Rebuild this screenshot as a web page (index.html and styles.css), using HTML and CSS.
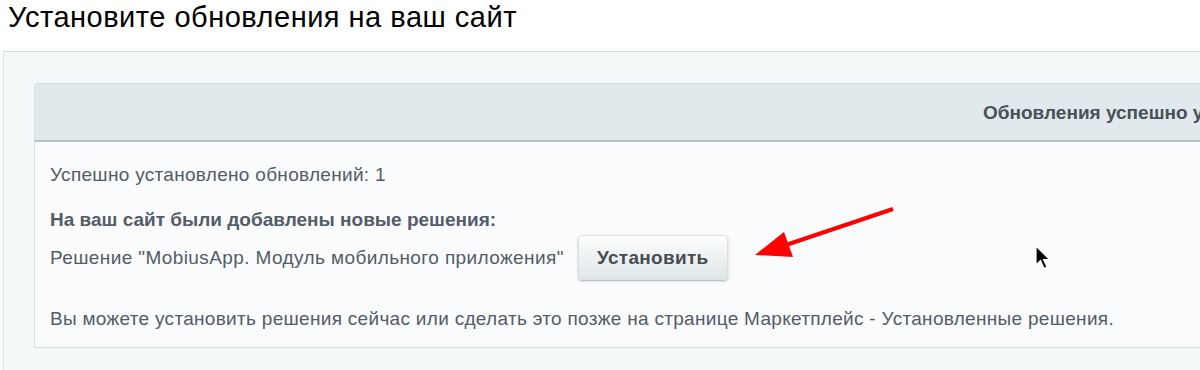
FILE: index.html
```html
<!DOCTYPE html>
<html lang="ru">
<head>
  <meta charset="UTF-8" />
  <meta name="viewport" content="width=device-width, initial-scale=1.0"/>
  <title>Установите обновления на ваш сайт</title>
  <link rel="stylesheet" href="styles.css">
</head>
<body>

  <h1 class="page-title">Установите обновления на ваш сайт</h1>

  <div class="panel">
    <div class="box">
      <div class="box-head">Обновления успешно установлены</div>
      <div class="box-body">
        <p class="line">Успешно установлено обновлений: 1</p>
        <p class="line bold">На ваш сайт были добавлены новые решения:</p>
        <div class="solution">
          <span>Решение "MobiusApp. Модуль мобильного приложения"</span>
          <button class="btn">Установить</button>
        </div>
        <p class="line note">Вы можете установить решения сейчас или сделать это позже на странице Маркетплейс - Установленные решения.</p>
      </div>
    </div>
  </div>

  <svg class="arrow" width="160" height="70" viewBox="0 0 160 70">
    <line x1="153" y1="9" x2="40" y2="47" stroke="#f00" stroke-width="4"/>
    <polygon points="15,55 44,32 53,57" fill="#f00"/>
  </svg>

  <svg class="cursor" width="16" height="26" viewBox="0 0 16 26">
    <path d="M1 1 L1 20 L5.5 15.5 L9 23.5 L12 22 L8.5 14.5 L14.5 14.5 Z" fill="#000" stroke="#fff" stroke-width="1.2"/>
  </svg>

</body>
</html>
```

FILE: styles.css
```css
* {
  box-sizing: border-box;
}

body {
  margin: 0;
  font-family: 'Liberation Sans', Arial, sans-serif;
  background: #fff;
  width: 1200px;
  height: 370px;
  overflow: hidden;
  position: relative;
}

.page-title {
  margin: 0;
  padding-left: 8px;
  height: 51px;
  font-size: 29px;
  font-weight: normal;
  letter-spacing: 0.5px;
  color: #000;
  line-height: 34px;
}

.panel {
  margin-left: 3px;
  width: 2400px;
  height: 340px;
  background: #f5f8f9;
  border-top: 1px solid #d5dcdf;
  border-left: 1px solid #dde4e6;
  padding: 31px 0 0 30px;
}

.box {
  width: 2140px;
  border: 1px solid #d3dcde;
  border-radius: 4px 4px 0 0;
  background: #fafbfc;
}

.box-head {
  height: 58px;
  background: #e0e9eb;
  border-bottom: 2px solid #b9c0c2;
  padding-left: 948px;
  font-size: 19px;
  font-weight: bold;
  color: #4a5058;
  line-height: 58px;
  border-radius: 4px 4px 0 0;
}

.box-body {
  padding: 22px 0 17px 15px;
  color: #535c69;
  font-size: 19px;
  letter-spacing: 0.3px;
}

.line {
  margin: 0;
  line-height: 22px;
}

.line.bold {
  font-weight: bold;
  letter-spacing: 0;
  margin-top: 23px;
}

.solution {
  display: flex;
  align-items: center;
  gap: 14px;
  margin-top: 4px;
  letter-spacing: 0.4px;
}

.btn {
  width: 150px;
  height: 45px;
  border: 1px solid #d9e0e2;
  border-radius: 4px;
  background: linear-gradient(#fdfdfd, #dfe6e8);
  box-shadow: 0 1px 2px rgba(0, 0, 0, 0.3);
  font-family: inherit;
  font-size: 19px;
  font-weight: bold;
  letter-spacing: 0.3px;
  color: #474d55;
  cursor: pointer;
}

.note {
  margin-top: 28px;
}

.arrow {
  position: absolute;
  left: 740px;
  top: 200px;
}

.cursor {
  position: absolute;
  left: 1035px;
  top: 245px;
}
```
